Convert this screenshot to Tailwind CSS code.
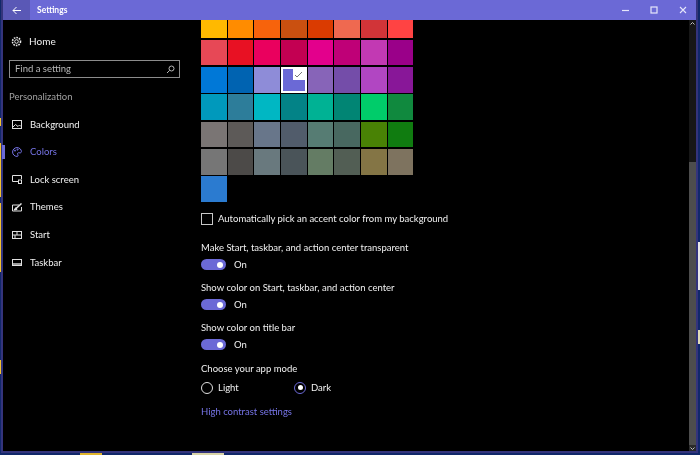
<!DOCTYPE html>
<html lang="en">
  <head>
    <meta charset="UTF-8" />
    <meta name="viewport" content="width=device-width, initial-scale=1.0" />
    <title>Settings</title>
    <script src="https://cdn.jsdelivr.net/npm/@tailwindcss/browser@4"></script>
  </head>
  <body class="relative w-[700px] h-[455px] overflow-hidden bg-[#11286a] font-['Lato','Noto_Sans',sans-serif] text-[9.5px] text-[#f0f0f0]">
    <!-- wallpaper peeking out round the window -->
    <div class="absolute left-0 top-[118px] w-[2px] h-[8px] bg-[#f2c22e]"></div>
    <div class="absolute left-0 top-[143px] w-[2px] h-[54px] bg-[#f2c22e]"></div>
    <div class="absolute left-0 top-[203px] w-[2px] h-[69px] bg-[#f2c22e]"></div>
    <div class="absolute left-0 top-[360px] w-[2px] h-[14px] bg-[#f2c22e]"></div>
    <div class="absolute left-[80px] top-[453px] w-[22px] h-[2px] bg-[#e0b52c]"></div>
    <div class="absolute left-[192px] top-[453px] w-[32px] h-[2px] bg-[#d8d4a8]"></div>
    <div class="absolute left-[698px] top-[242px] w-[2px] h-[48px] bg-[#e8e8e8]"></div>
    <div class="absolute left-[698px] top-[330px] w-[2px] h-[14px] bg-[#e0dcb8]"></div>

    <div class="relative ml-px w-[697px] h-[453px] flex flex-col border-2 border-t-0 border-[#34347c] bg-black blur-[0.3px]">
      <header class="h-5 shrink-0 flex items-center bg-[#6b69d6] text-white">
        <div class="w-[27px] h-full flex items-center justify-center bg-[#5a58b6]">
          <svg width="10" height="9" viewBox="0 0 10 9" fill="none" stroke="white" stroke-width="1"><path d="M9 4.5H1M4.5 1 1 4.5 4.5 8" /></svg>
        </div>
        <span class="ml-[7px] text-[8.5px] font-bold">Settings</span>
        <div class="ml-auto flex items-center">
          <svg class="mr-[21px]" width="7" height="3" viewBox="0 0 7 3" stroke="#e6e6fa" stroke-width="1.2"><path d="M0 1.500H7" /></svg>
          <svg class="mr-[21px]" width="8" height="8" viewBox="0 0 8 8" fill="none" stroke="#e6e6fa" stroke-width="1.2"><rect x="1" y="1" width="6" height="6" /></svg>
          <svg class="mr-[9px]" width="8" height="8" viewBox="0 0 8 8" fill="none" stroke="#e6e6fa" stroke-width="1.1"><path d="M1 1 7 7M7 1 1 7" /></svg>
        </div>
      </header>

      <div class="flex-1 flex min-h-0">
        <!-- sidebar -->
        <nav class="relative w-[187px] shrink-0">
          <div class="h-[40px] flex items-center pl-[8px] pt-[3px] gap-[7px]">
            <svg width="11" height="11" viewBox="0 0 11 11" fill="none" stroke="#e8e8e8"><circle cx="5.500" cy="5.500" r="1.800" /><circle cx="5.500" cy="5.500" r="4" stroke-width="1.600" stroke-dasharray="1.600 1" /></svg>
            <span class="text-[10px]">Home</span>
          </div>
          <div class="ml-[6px] w-[171px] h-[18px] flex items-center justify-between border-[1.5px] border-[#8c8c8c] pl-[5px] pr-[4px] text-[#b8b8b8]">
            <span>Find a setting</span>
            <svg width="9" height="9" viewBox="0 0 9 9" fill="none" stroke="#b8b8b8"><circle cx="5.500" cy="3.500" r="2.500" /><path d="M3.700 5.300 1 8" /></svg>
          </div>
          <div class="mt-[10px] ml-[6px] h-[19px] flex items-center text-[#a0a0a0]">Personalization</div>

          <div class="mt-[4px] flex flex-col">
            <div class="h-[27.6px] flex items-center pl-[9px] gap-[8px]">
              <svg width="10" height="9" viewBox="0 0 10 9" fill="none" stroke="#e0e0e0"><rect x="0.500" y="0.500" width="9" height="8" /><path d="M1 7 3.500 4.500 6 6.500 7.500 5 9 6.500" /></svg>
              <span>Background</span>
            </div>
            <div class="relative h-[27.6px] flex items-center pl-[9px] gap-[8px] text-[#7674e6]">
              <span class="absolute left-[-1px] top-[6px] w-[3px] h-[14px] bg-[#6b69d6]"></span>
              <svg width="10" height="10" viewBox="0 0 10 10" fill="none" stroke="#7674e6"><path d="M5 .6A4.400 4.400 0 1 0 5 9.400C6.600 9.400 6 8 5.600 7.200 5.200 6.200 6 5.600 7 5.800 8.400 6 9.400 5.800 9.400 4.600 9.400 2.400 7.400 .6 5 .6Z" /><circle cx="3" cy="3.600" r=".6" /><circle cx="5.600" cy="2.600" r=".6" /></svg>
              <span>Colors</span>
            </div>
            <div class="h-[27.6px] flex items-center pl-[9px] gap-[8px]">
              <svg width="10" height="9" viewBox="0 0 10 9" fill="none" stroke="#e0e0e0"><path d="M6 6.500H.5V.5H9.500V4" /><rect x="6.500" y="5" width="3" height="3.500" /></svg>
              <span>Lock screen</span>
            </div>
            <div class="h-[27.6px] flex items-center pl-[9px] gap-[8px]">
              <svg width="10" height="9" viewBox="0 0 10 9" fill="none" stroke="#e0e0e0"><path d="M7 2H.5V8H9.500V4" /><path d="M3 6.500 9.500 .5" stroke-width="1.500" /><path d="M2 7 4 4.500 5 6.500Z" fill="#e0e0e0" /></svg>
              <span>Themes</span>
            </div>
            <div class="h-[27.6px] flex items-center pl-[9px] gap-[8px]">
              <svg width="10" height="8" viewBox="0 0 10 8" fill="none" stroke="#e0e0e0"><rect x="0.500" y="0.500" width="9" height="7" /><path d="M.5 4H9.500M5 .5V4M3 4V7.500" /></svg>
              <span>Start</span>
            </div>
            <div class="h-[27.6px] flex items-center pl-[9px] gap-[8px]">
              <svg width="10" height="7" viewBox="0 0 10 7" fill="none" stroke="#e0e0e0"><rect x="0.500" y="0.500" width="9" height="6" /><path d="M.5 5H9.500" stroke-width="1.400" /></svg>
              <span>Taskbar</span>
            </div>
          </div>
        </nav>

        <!-- colour settings, scrolled part way down -->
        <main class="flex-1 min-w-0 overflow-hidden pl-[11px]">
          <div class="mt-[-7.7px] grid grid-cols-[repeat(8,25.67px)] auto-rows-[25.67px] gap-x-px gap-y-[1.67px]">
            <div class="bg-[#ffb900]"></div><div class="bg-[#ff8c00]"></div><div class="bg-[#f7630c]"></div><div class="bg-[#ca5010]"></div><div class="bg-[#da3b01]"></div><div class="bg-[#ef6950]"></div><div class="bg-[#d13438]"></div><div class="bg-[#ff4343]"></div>
            <div class="bg-[#e74856]"></div><div class="bg-[#e81123]"></div><div class="bg-[#ea005e]"></div><div class="bg-[#c30052]"></div><div class="bg-[#e3008c]"></div><div class="bg-[#bf0077]"></div><div class="bg-[#c239b3]"></div><div class="bg-[#9a0089]"></div>
            <div class="bg-[#0078d7]"></div><div class="bg-[#0063b1]"></div><div class="bg-[#8e8cd8]"></div>
            <div class="relative bg-[#6b69d6] border-2 border-white">
              <div class="absolute right-0 top-0 w-[12px] h-[11px] flex items-center justify-center bg-white">
                <svg width="9" height="7" viewBox="0 0 9 7" fill="none" stroke="#777" stroke-width="1"><path d="M1 4 3 6 8 1" /></svg>
              </div>
            </div>
            <div class="bg-[#8764b8]"></div><div class="bg-[#744da9]"></div><div class="bg-[#b146c2]"></div><div class="bg-[#881798]"></div>
            <div class="bg-[#0099bc]"></div><div class="bg-[#2d7d9a]"></div><div class="bg-[#00b7c3]"></div><div class="bg-[#038387]"></div><div class="bg-[#00b294]"></div><div class="bg-[#018574]"></div><div class="bg-[#00cc6a]"></div><div class="bg-[#10893e]"></div>
            <div class="bg-[#7a7574]"></div><div class="bg-[#5d5a58]"></div><div class="bg-[#68768a]"></div><div class="bg-[#515c6b]"></div><div class="bg-[#567c73]"></div><div class="bg-[#486860]"></div><div class="bg-[#498205]"></div><div class="bg-[#107c10]"></div>
            <div class="bg-[#767676]"></div><div class="bg-[#4c4a48]"></div><div class="bg-[#69797e]"></div><div class="bg-[#4a5459]"></div><div class="bg-[#647c64]"></div><div class="bg-[#525e54]"></div><div class="bg-[#847545]"></div><div class="bg-[#7e735f]"></div>
            <div class="bg-[#2b7bd0]"></div>
          </div>

          <label class="mt-[11px] flex items-center gap-[5px] h-[12px]">
            <span class="w-[12px] h-[12px] border-[1.5px] border-[#c8c8c8]"></span>
            <span>Automatically pick an accent color from my background</span>
          </label>

          <div class="mt-[17px] h-[12px] flex items-center">Make Start, taskbar, and action center transparent</div>
          <div class="mt-[5px] h-[12px] flex items-center gap-[8px]">
            <span class="w-[25px] h-[11px] flex items-center justify-end pr-[3px] rounded-full bg-[#6b69d6]"><span class="w-[6px] h-[6px] rounded-full bg-white"></span></span>
            <span>On</span>
          </div>

          <div class="mt-[11px] h-[12px] flex items-center">Show color on Start, taskbar, and action center</div>
          <div class="mt-[5px] h-[12px] flex items-center gap-[8px]">
            <span class="w-[25px] h-[11px] flex items-center justify-end pr-[3px] rounded-full bg-[#6b69d6]"><span class="w-[6px] h-[6px] rounded-full bg-white"></span></span>
            <span>On</span>
          </div>

          <div class="mt-[11px] h-[12px] flex items-center">Show color on title bar</div>
          <div class="mt-[5px] h-[12px] flex items-center gap-[8px]">
            <span class="w-[25px] h-[11px] flex items-center justify-end pr-[3px] rounded-full bg-[#6b69d6]"><span class="w-[6px] h-[6px] rounded-full bg-white"></span></span>
            <span>On</span>
          </div>

          <div class="mt-[12px] h-[12px] flex items-center">Choose your app mode</div>
          <div class="mt-[7px] h-[12px] flex items-center">
            <span class="w-[12px] h-[12px] rounded-full border-[1.5px] border-[#e0e0e0]"></span>
            <span class="ml-[5px] w-[76px]">Light</span>
            <span class="w-[12px] h-[12px] flex items-center justify-center rounded-full border-[1.5px] border-[#6b69d6]"><span class="w-[5px] h-[5px] rounded-full bg-white"></span></span>
            <span class="ml-[5px]">Dark</span>
          </div>

          <div class="mt-[12px] h-[12px] flex items-center text-[#7674e6]">High contrast settings</div>
        </main>

        <!-- scrollbar -->
        <div class="w-[7px] shrink-0 flex flex-col bg-[#171717]">
          <svg class="mt-[2px] ml-[1px]" width="5" height="3" viewBox="0 0 5 3" fill="none" stroke="#c0c0c0"><path d="M.5 2.500 2.500 .5 4.500 2.500" /></svg>
          <div class="mt-[137px] flex-1 bg-[#4d4d4d]"></div>
          <div class="h-[6px] flex items-center justify-center bg-[#2a2a2a]">
            <svg width="5" height="3" viewBox="0 0 5 3" fill="none" stroke="#c0c0c0"><path d="M.5 .5 2.500 2.500 4.500 .5" /></svg>
          </div>
        </div>
      </div>
    </div>
  </body>
</html>
